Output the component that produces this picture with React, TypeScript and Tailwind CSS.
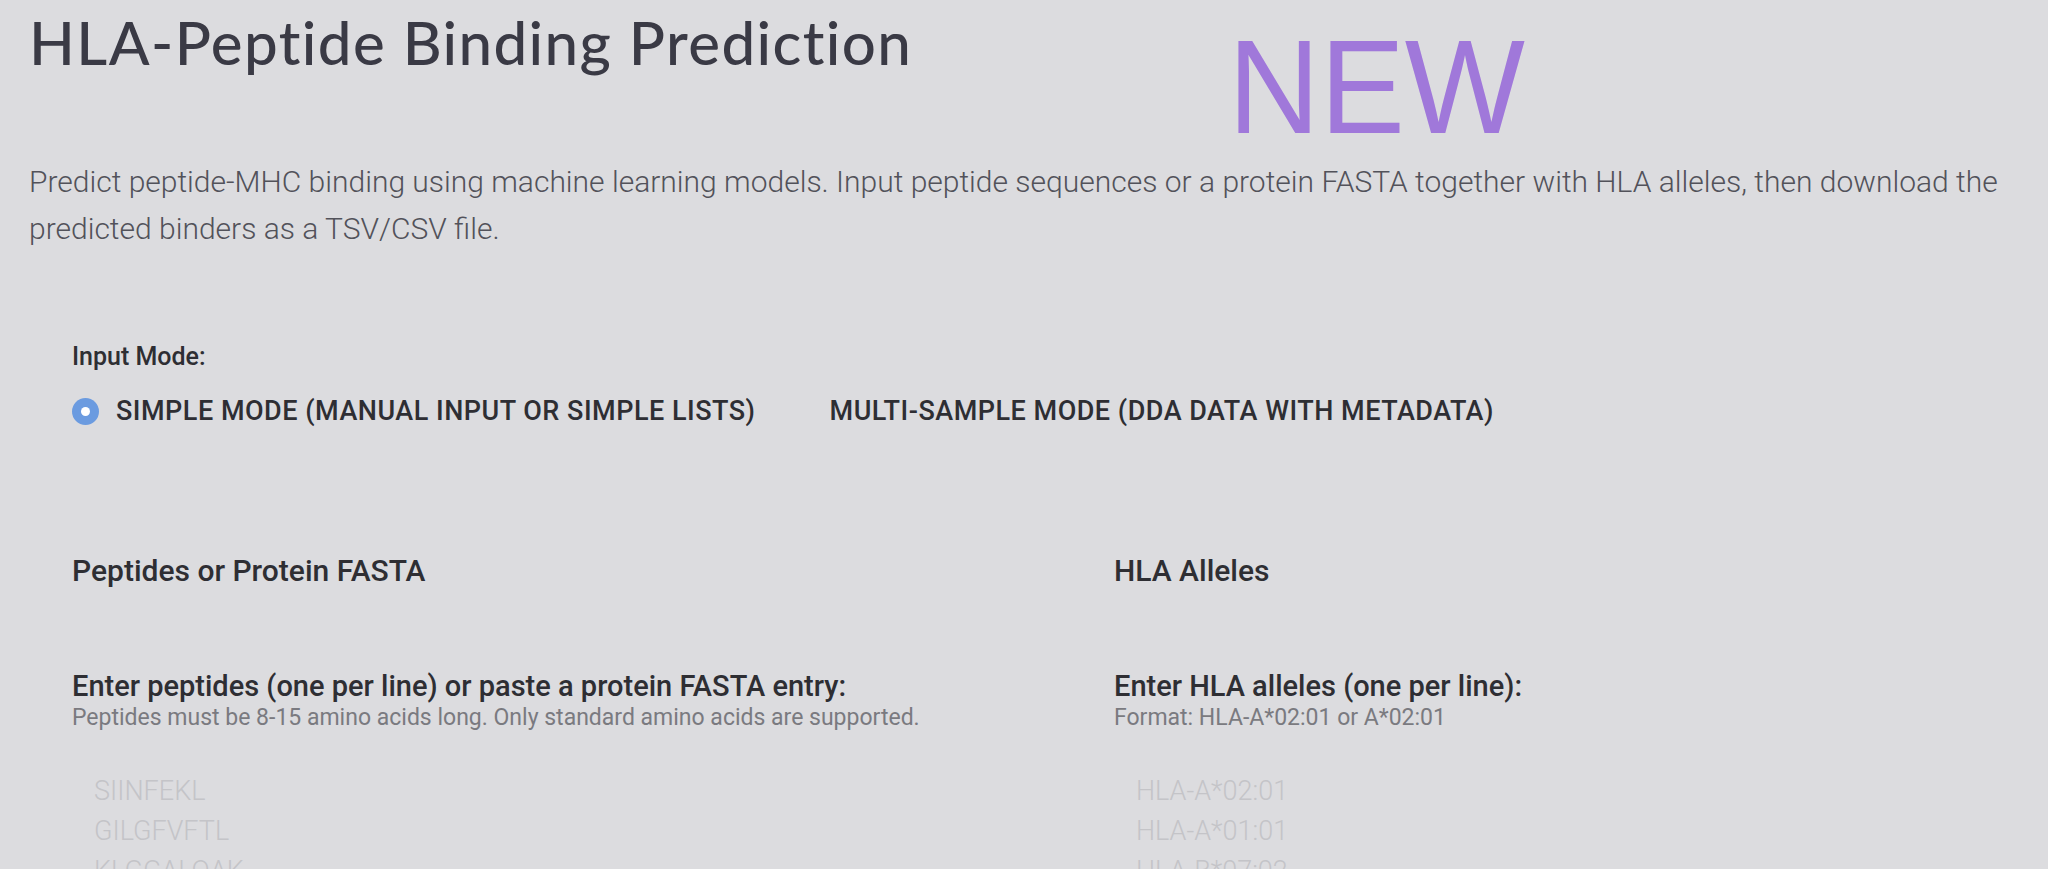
import { useState } from "react";

const body = "font-['Roboto','Liberation_Sans',sans-serif]";

export default function App() {
  const [mode, setMode] = useState("simple");
  const [peptides, setPeptides] = useState("");
  const [alleles, setAlleles] = useState("");

  return (
    <div className={`h-[869px] w-full overflow-hidden bg-[#dcdcdf] ${body}`}>
      <div className="px-[29px]">
        {/* header */}
        <div className="flex h-[150px] items-start">
          <h1 className="mt-[6px] font-['Lato',sans-serif] text-[60px] font-medium leading-[72px] tracking-[1.4px] text-[#3a3a45]">
            HLA-Peptide Binding Prediction
          </h1>
          <span className="ml-[316px] mt-[20px] inline-block origin-left scale-x-[0.95] font-['Liberation_Sans',sans-serif] text-[134px] leading-[134px] text-[#a078da]">
            NEW
          </span>
        </div>

        <p className="mt-[8px] max-w-[2000px] text-[30px] font-light leading-[47px] text-[#52525a]">
          Predict peptide-MHC binding using machine learning models. Input peptide sequences or a protein FASTA
          together with HLA alleles, then download the predicted binders as a TSV/CSV file.
        </p>
      </div>

      <div className="px-[72px] pt-[90px]">
        {/* input mode */}
        <div className="text-[25px] font-medium leading-[30px] text-[#2e2e33]">Input Mode:</div>
        <div className="mt-[21px] flex h-[36px] items-center gap-[74px]">
          <label className="flex cursor-pointer items-center gap-[17px]" onClick={() => setMode("simple")}>
            <span
              className={`flex h-[27px] w-[27px] items-center justify-center rounded-full ${
                mode === "simple" ? "bg-[#6b9be0]" : "border-2 border-[#9a9aa0]"
              }`}
            >
              {mode === "simple" && <span className="h-[9px] w-[9px] rounded-full bg-white" />}
            </span>
            <span className="text-[27px] font-medium uppercase leading-[36px] tracking-[0.5px] text-[#2e2e33]">
              Simple Mode (Manual Input or Simple Lists)
            </span>
          </label>
          <label className="flex cursor-pointer items-center" onClick={() => setMode("multi")}>
            <span className="text-[27px] font-medium uppercase leading-[36px] tracking-[0.5px] text-[#2e2e33]">
              Multi-Sample Mode (DDA Data with Metadata)
            </span>
          </label>
        </div>

        {/* inputs */}
        <div className="mt-[122px] grid grid-cols-[1042px_1fr]">
          <div>
            <h3 className="text-[30px] font-medium leading-[40px] text-[#2e2e33]">Peptides or Protein FASTA</h3>
            <div className="mt-[77px] text-[29px] font-medium leading-[36px] text-[#2e2e33]">
              Enter peptides (one per line) or paste a protein FASTA entry:
            </div>
            <div className="text-[23px] leading-[28px] text-[#7a7a80]">
              Peptides must be 8-15 amino acids long. Only standard amino acids are supported.
            </div>
            <textarea
              value={peptides}
              onChange={(e) => setPeptides(e.target.value)}
              placeholder={"SIINFEKL\nGILGFVFTL\nKLGGALQAK"}
              className="mt-[39px] block h-[200px] w-[900px] resize-none bg-transparent px-[22px] py-0 text-[27px] font-light leading-[40px] text-[#333] outline-none placeholder:text-[#c4c4c8]"
            />
          </div>
          <div>
            <h3 className="text-[30px] font-medium leading-[40px] text-[#2e2e33]">HLA Alleles</h3>
            <div className="mt-[77px] text-[29px] font-medium leading-[36px] text-[#2e2e33]">
              Enter HLA alleles (one per line):
            </div>
            <div className="text-[23px] leading-[28px] text-[#7a7a80]">Format: HLA-A*02:01 or A*02:01</div>
            <textarea
              value={alleles}
              onChange={(e) => setAlleles(e.target.value)}
              placeholder={"HLA-A*02:01\nHLA-A*01:01\nHLA-B*07:02"}
              className="mt-[39px] block h-[200px] w-[800px] resize-none bg-transparent px-[22px] py-0 text-[27px] font-light leading-[40px] text-[#333] outline-none placeholder:text-[#c4c4c8]"
            />
          </div>
        </div>
      </div>
    </div>
  );
}
